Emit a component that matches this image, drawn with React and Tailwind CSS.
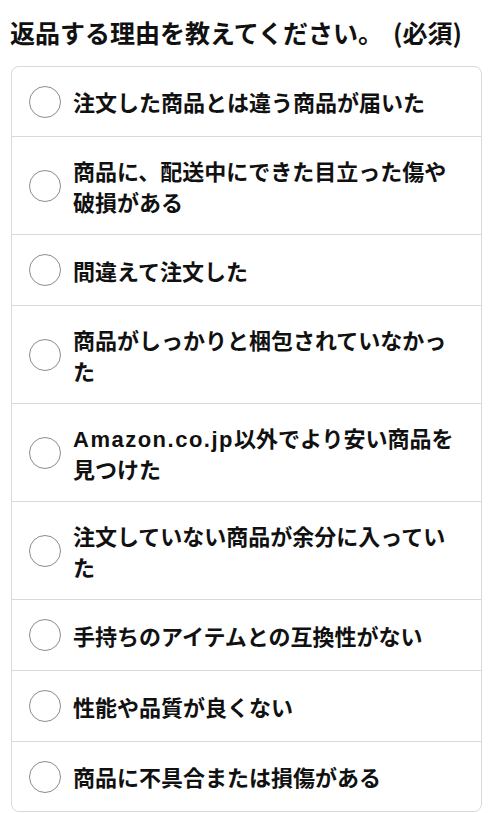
import React from 'react';

const reasons = [
  '注文した商品とは違う商品が届いた',
  '商品に、配送中にできた目立った傷や破損がある',
  '間違えて注文した',
  '商品がしっかりと梱包されていなかった',
  'AMAZON',
  '注文していない商品が余分に入っていた',
  '手持ちのアイテムとの互換性がない',
  '性能や品質が良くない',
  '商品に不具合または損傷がある',
];

const ReasonRow = ({ label }) => (
  <label className="flex items-center min-h-[71px] first:min-h-[70px] last:min-h-[69px] py-[17.5px] pl-[17px] pr-[16px] cursor-pointer">
    <span className="shrink-0 w-[32px] h-[32px] rounded-full border-[1.5px] border-[#8c8c8c] bg-white" />
    <span className="ml-[12px] text-[22px] leading-[31px] font-bold text-[#111111]">
      {label === 'AMAZON' ? (
        <>
          <span className="font-['Liberation_Sans',sans-serif] leading-none tracking-[1.5px]">Amazon.co.jp</span>
          以外でより安い商品を見つけた
        </>
      ) : (
        label
      )}
    </span>
  </label>
);

const App = () => {
  return (
    <div className="min-h-screen bg-white font-['Noto_Sans_CJK_JP',sans-serif] overflow-hidden">
      <h2 className="pl-[10px] pt-[16px] text-[25px] leading-[32px] font-bold text-[#111111]">
        返品する理由を教えてください。<span className="ml-[10px]">(必須)</span>
      </h2>

      {/* Options list */}
      <div className="mt-[18px] mx-[11px] w-[471px] border border-[#d9d9d9] rounded-[8px] divide-y divide-[#d9d9d9]">
        {reasons.map((r) => (
          <ReasonRow key={r} label={r} />
        ))}
      </div>
    </div>
  );
};

export default App;
